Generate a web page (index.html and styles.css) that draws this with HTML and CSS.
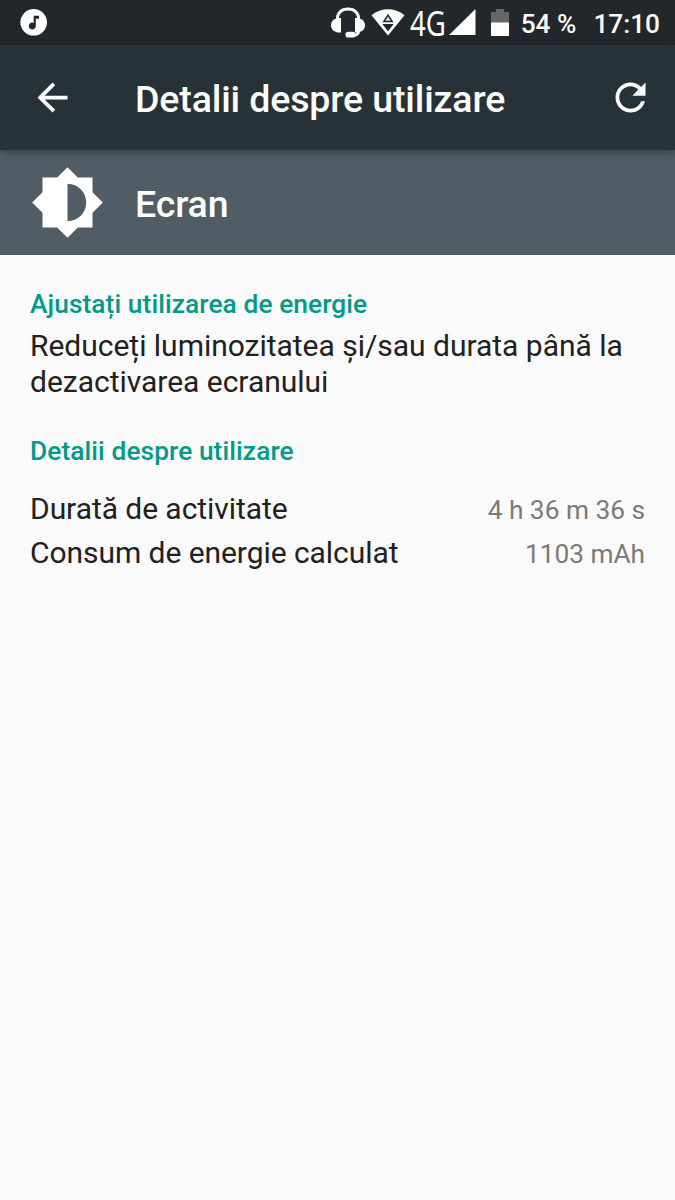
FILE: index.html
```html
<!DOCTYPE html>
<html lang="ro">
<head>
<meta charset="utf-8">
<title>Detalii despre utilizare</title>
<link rel="stylesheet" href="styles.css">
</head>
<body>
<div class="status-bar">
  <svg class="status-icon" width="28" height="28" viewBox="0 0 28 28">
    <circle cx="13.700" cy="14.300" r="13.300" fill="#fff"/>
    <path d="M13.700 7.700h5.300v3h-3.200v7.200a3.500 3.500 0 1 1-2.100-3.100z" fill="#22272b"/>
  </svg>
  <div class="status-right">
    <svg class="headset" width="34" height="32" viewBox="0 0 34 32">
      <path d="M6.300 13C6.300 6 10.500 2 17 2S27.700 6 27.700 13" fill="none" stroke="#fff" stroke-width="3"/>
      <path d="M7 11h3v14.500H7C3 24.500 0 22.500 0 18.200S3 12 7 11zM27 11h-3v14.500h3c4-1 7-3 7-7.300S31 12 27 11z" fill="#fff"/>
      <path d="M27.500 24c0 3.500-2 4.500-7 4.500" fill="none" stroke="#fff" stroke-width="3"/>
      <rect x="14.500" y="24.800" width="10" height="5.700" rx="2.850" fill="#fff"/>
    </svg>
    <svg class="wifi" width="34" height="28" viewBox="0 0 34 28">
      <path d="M.5 6.200C10.500-1.600 23.500-1.600 33.500 6.200L17 26.500z" fill="#fff"/>
      <path d="M17 6.200l4.200 6.300h-8.400z" fill="#dcdddd" stroke="#22272b" stroke-width="1.500"/>
      <path d="M11.300 15h11.400L17 22.300z" fill="#22272b"/>
    </svg>
    <svg class="network" width="35" height="36" viewBox="0 0 35 36">
      <text class="network-text" x="0" y="30.500" textLength="36" lengthAdjust="spacingAndGlyphs">4G</text>
    </svg>
    <svg class="signal" width="27" height="27" viewBox="0 0 27 27"><path d="M26.500 0v26H0z" fill="#fff"/></svg>
    <svg class="battery" width="18" height="27" viewBox="0 0 18 27">
      <path d="M0 3h5V0h8v3h5v11H0z" fill="#646769"/>
      <path d="M0 13.500h18V27H0z" fill="#fff"/>
    </svg>
    <span class="percent">54 %</span>
    <span class="clock">17:10</span>
  </div>
</div>
<header class="app-bar">
  <svg class="icon" viewBox="0 0 24 24"><path d="M20 11H7.830l5.590-5.590L12 4l-8 8 8 8 1.410-1.410L7.830 13H20v-2z"/></svg>
  <h1 class="title">Detalii despre utilizare</h1>
  <svg class="icon" viewBox="0 0 24 24"><path d="M17.650 6.350C16.200 4.900 14.210 4 12 4c-4.420 0-7.990 3.580-7.990 8s3.570 8 7.990 8c3.730 0 6.840-2.550 7.730-6h-2.080c-.82 2.330-3.040 4-5.650 4-3.310 0-6-2.690-6-6s2.690-6 6-6c1.660 0 3.140.69 4.220 1.780L13 11h7V4l-2.350 2.350z"/></svg>
</header>
<section class="entity">
  <svg class="entity-icon" viewBox="0 0 24 24"><path d="M20 15.310L23.310 12 20 8.690V4h-4.690L12 .69 8.690 4H4v4.690L.69 12 4 15.310V20h4.690L12 23.310 15.310 20H20v-4.690zM12 18V6c3.310 0 6 2.690 6 6s-2.690 6-6 6z"/></svg>
  <h2 class="title">Ecran</h2>
</section>
<main class="content">
  <h3 class="heading">Ajustați utilizarea de energie</h3>
  <p class="advice">Reduceți luminozitatea și/sau durata până la dezactivarea ecranului</p>
  <h3 class="heading">Detalii despre utilizare</h3>
  <dl class="details">
    <div class="row"><dt class="label">Durată de activitate</dt><dd class="value">4 h 36 m 36 s</dd></div>
    <div class="row"><dt class="label">Consum de energie calculat</dt><dd class="value">1103 mAh</dd></div>
  </dl>
</main>
</body>
</html>
```
FILE: styles.css
```css
* { box-sizing: border-box; margin: 0; padding: 0; }
body {
  min-height: 1200px;
  background: #fafafa;
  color: #212121;
  font-family: Roboto, "Noto Sans", sans-serif;
}
svg { display: block; flex: none; }
.status-bar {
  display: flex;
  justify-content: space-between;
  height: 45px;
  padding: 0 15px 0 20px;
  background: #22272b;
  color: #fff;
}
.status-icon { margin-top: 8px; }
.status-right { display: flex; align-items: flex-start; }
.headset { margin-top: 7px; }
.wifi { margin: 9px 0 0 6px; }
.network { margin: 5px 0 0 5px; overflow: visible; }
.network-text { font: 400 35px "Noto Sans", sans-serif; fill: #fff; }
.signal { margin: 9px 0 0 4px; }
.battery { margin: 9px 0 0 15px; }
.percent, .clock {
  font-size: 26.25px;
  font-weight: 500;
  line-height: 48px;
  white-space: nowrap;
}
.percent { margin-left: 12px; }
.clock { margin-left: 17px; }
.app-bar {
  position: relative;
  display: flex;
  align-items: center;
  height: 105px;
  padding: 0 22.5px 0 30px;
  background: #273238;
  box-shadow: 0 2px 7px rgba(0, 0, 0, .35);
}
.icon { width: 45px; height: 45px; fill: #fff; }
.title {
  flex: 1;
  color: #fff;
  font-size: 37.5px;
  font-weight: 500;
  line-height: 44px;
  letter-spacing: -.13px;
}
.app-bar .title { margin-left: 60px; padding-top: 2px; }
.entity {
  display: flex;
  align-items: center;
  height: 105px;
  padding: 0 30px;
  background: #505d64;
}
.entity-icon { width: 75px; height: 75px; fill: #fff; }
.entity .title { margin-left: 30px; padding-top: 2px; }
.content { padding: 34px 30px 0; }
.heading {
  color: #009a8b;
  font-size: 26.25px;
  font-weight: 500;
  line-height: 31px;
  letter-spacing: .1px;
}
.advice {
  margin: 8px 0 37px;
  font-size: 30px;
  line-height: 35.5px;
  letter-spacing: -.02px;
}
.details { margin-top: 20px; }
.row {
  display: flex;
  justify-content: space-between;
  align-items: baseline;
  height: 44px;
}
.label { font-size: 30px; line-height: 44px; letter-spacing: -.06px; }
.value { color: #7a7a7a; font-size: 26.25px; line-height: 44px; }
```
